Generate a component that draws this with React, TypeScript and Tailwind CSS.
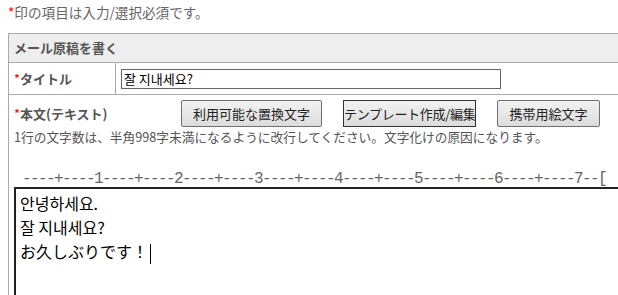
import React from "react";

const jp = '"Noto Sans CJK JP", "Noto Sans", sans-serif';
const kr = '"Noto Sans CJK KR", "Noto Sans CJK JP", sans-serif';

const RULER = "----+----1----+----2----+----3----+----4----+----5----+----6----+----7--[";

function Req() {
  return <span className="text-[#ff0000] font-normal">*</span>;
}

function Btn({ label, className }: { label: string; className: string }) {
  return (
    <button
      type="button"
      className={
        "h-[27px] shrink-0 overflow-hidden whitespace-nowrap bg-gradient-to-b from-[#f2f2f2] to-[#dcdcdc] px-0 text-center text-[13px] leading-none text-[#222] " +
        className
      }
    >
      {label}
    </button>
  );
}

export default function App() {
  return (
    <div
      className="h-[295px] w-[618px] overflow-hidden bg-white text-[#555]"
      style={{ fontFamily: jp }}
    >
      <p className="pl-2 pt-[2px] text-[13.6px] leading-[20px] text-[#666]">
        <Req />印の項目は入力/選択必須です。
      </p>

      <div className="ml-2 mt-[11px] w-[720px] border-l border-t border-[#aaa]">
        {/* 見出し */}
        <div className="flex h-[29px] items-center border-b border-[#aaa] bg-[#eee] pl-[5px] text-[13px] font-bold">
          メール原稿を書く
        </div>

        {/* タイトル */}
        <div className="flex h-[32px] border-b border-[#aaa]">
          <div className="flex w-[107px] items-center border-r border-[#aaa] pl-[5px] text-[13px] font-bold">
            <Req />タイトル
          </div>
          <div className="flex items-center pl-[5px]">
            <input
              readOnly
              value="잘 지내세요?"
              className="h-[20px] w-[380px] border border-[#666] px-[2px] text-[13px] text-black outline-none"
              style={{ fontFamily: kr }}
            />
          </div>
        </div>

        {/* 本文 */}
        <div className="pl-[5px] pt-[5px]">
          <div className="flex items-center">
            <div className="w-[167px] text-[13px] font-bold">
              <Req />本文(テキスト)
            </div>
            <div className="flex">
              <Btn label="利用可能な置換文字" className="w-[141px] rounded-[2px] border border-[#707070]" />
              <Btn label="テンプレート作成/編集" className="ml-[21px] w-[133px] border border-[#333] tracking-[-0.3px]" />
              <Btn label="携帯用絵文字" className="ml-[21px] w-[103px] rounded-[2px] border border-[#707070]" />
            </div>
          </div>
          <p className="mt-[1px] text-[12.7px] leading-[18px]">
            1行の文字数は、半角998字未満になるように改行してください。文字化けの原因になります。
          </p>
          <div
            className="mt-[24px] whitespace-pre pl-[8px] text-[16px] leading-[18px] tracking-[-1.6px] text-[#666]"
            style={{ fontFamily: '"Liberation Mono", monospace' }}
          >
            {RULER}
          </div>
          <div
            className="mt-[-1px] h-[120px] border-l-2 border-t-2 border-[#222] px-[4px] pt-[2px] text-[16px] leading-[24px] text-black"
            style={{ fontFamily: kr }}
          >
            <div>안녕하세요.</div>
            <div>잘 지내세요?</div>
            <div style={{ fontFamily: jp }}>
              お久しぶりです！
              <span className="ml-[2px] inline-block h-[20px] w-px bg-black align-middle" />
            </div>
          </div>
        </div>
      </div>
    </div>
  );
}
